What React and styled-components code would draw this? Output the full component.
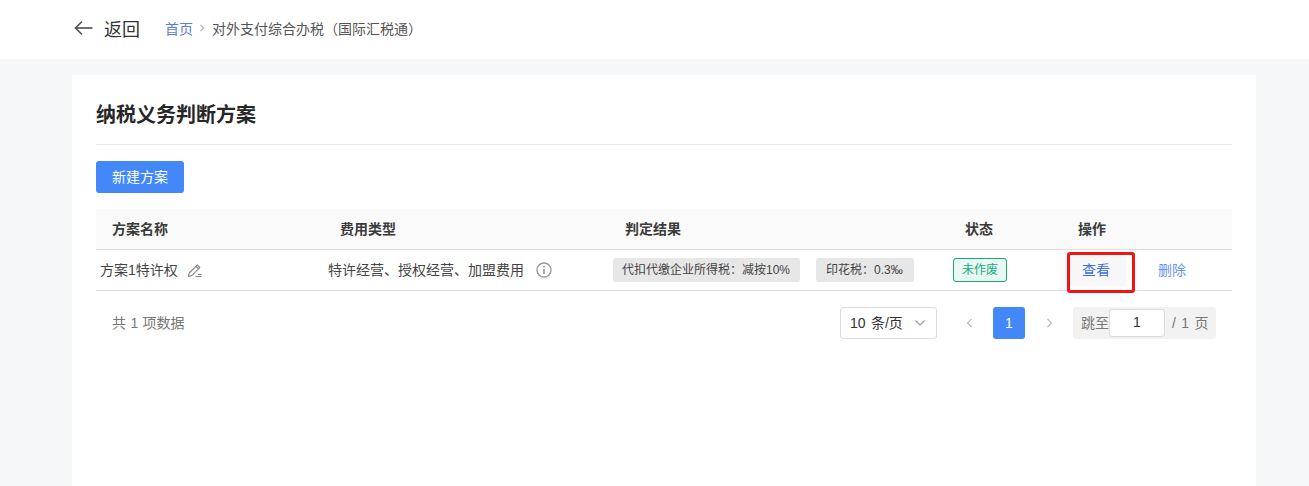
import React from 'react'
import styled, { createGlobalStyle } from 'styled-components'

const columns = '228px 285px 340px 113px 1fr'

const App = () => {
  return (
    <>
      <GlobalStyle />
      <Page>
        <TopBar>
          <BackLink>
            <svg width="19" height="16" viewBox="0 0 19 16" fill="none" stroke="#555" strokeWidth="1.7">
              <path d="M18.5 8H1.5" />
              <path d="M8 1.5 1.5 8 8 14.5" />
            </svg>
            <BackText>返回</BackText>
          </BackLink>
          <Crumbs>
            <CrumbLink>首页</CrumbLink>
            <CrumbSep>
              <svg width="6" height="8" viewBox="0 0 6 8" fill="none" stroke="#b4b4b4" strokeWidth="1.2">
                <path d="m1.5 .8 3 3.2-3 3.2" />
              </svg>
            </CrumbSep>
            <CrumbText>对外支付综合办税（国际汇税通）</CrumbText>
          </Crumbs>
        </TopBar>
        <Card>
          <Title>纳税义务判断方案</Title>
          <PrimaryButton>新建方案</PrimaryButton>
          <HeadRow>
            <HeadCell>方案名称</HeadCell>
            <HeadCell>费用类型</HeadCell>
            <HeadCell>判定结果</HeadCell>
            <HeadCell>状态</HeadCell>
            <HeadCell>操作</HeadCell>
          </HeadRow>
          <BodyRow>
            <BodyCell $text>
              方案1特许权
              <IconSlot $gap={9}>
                <svg width="15" height="15" viewBox="0 0 15 15" fill="none" stroke="#808080" strokeWidth="1.1">
                  <path d="M1.5 13.5 2.2 10 10.2 2l2.6 2.6-8 8z" />
                  <path d="M9 3.3l2.6 2.6" />
                  <path d="M8.5 13.5h6M11 11.5h3.5" />
                </svg>
              </IconSlot>
            </BodyCell>
            <BodyCell $text>
              特许经营、授权经营、加盟费用
              <IconSlot $gap={12}>
                <svg width="16" height="16" viewBox="0 0 16 16" fill="none" stroke="#999" strokeWidth="1.4">
                  <circle cx="8" cy="8" r="7" />
                  <path d="M8 7v5" strokeWidth="1.7" />
                  <path d="M8 3.8v1.7" strokeWidth="1.7" />
                </svg>
              </IconSlot>
            </BodyCell>
            <BodyCell>
              <ResultTag>代扣代缴企业所得税：减按10%</ResultTag>
              <ResultTag $second>印花税：0.3‰</ResultTag>
            </BodyCell>
            <BodyCell>
              <StatusTag>未作废</StatusTag>
            </BodyCell>
            <ActionCell>
              <ViewButton>查看</ViewButton>
              <DeleteLink>删除</DeleteLink>
              <RedMark />
            </ActionCell>
          </BodyRow>
          <PagerRow>
            <Total>共 1 项数据</Total>
            <PageSize>
              <PageSizeText>10 条/页</PageSizeText>
              <svg width="12" height="8" viewBox="0 0 12 8" fill="none" stroke="#999" strokeWidth="1.2">
                <path d="m1.5 1.5 4.5 4.5 4.5-4.5" />
              </svg>
            </PageSize>
            <PageArrow $left={16}>
              <svg width="7" height="10" viewBox="0 0 7 10" fill="none" stroke="#bbb" strokeWidth="1.2">
                <path d="M5.5 1 1.5 5l4 4" />
              </svg>
            </PageArrow>
            <PageNumber>1</PageNumber>
            <PageArrow>
              <svg width="7" height="10" viewBox="0 0 7 10" fill="none" stroke="#bbb" strokeWidth="1.2">
                <path d="m1.5 1 4 4-4 4" />
              </svg>
            </PageArrow>
            <Jumper>
              <JumpLabel>跳至</JumpLabel>
              <JumpInput>1</JumpInput>
              <JumpSuffix>/ 1 页</JumpSuffix>
            </Jumper>
          </PagerRow>
        </Card>
      </Page>
    </>
  )
}

export default App

const GlobalStyle = createGlobalStyle`
  html, body {
    margin: 0;
    padding: 0;
    height: 100%;
    overflow: hidden;
    background: #f6f7f9;
    font-family: "Liberation Sans", "Noto Sans CJK SC", sans-serif;
  }
`

const Page = styled.div`
  height: 486px;
  display: flex;
  flex-direction: column;
  overflow: hidden;
  background: #f6f7f9;
`

const TopBar = styled.div`
  height: 59px;
  box-sizing: border-box;
  flex: none;
  display: flex;
  align-items: center;
  padding: 0 0 3px 74px;
  background: #fff;
`

const BackLink = styled.div`
  display: flex;
  align-items: center;
  gap: 11px;
`

const BackText = styled.span`
  font-size: 18px;
  color: #333;
`

const Crumbs = styled.div`
  display: flex;
  align-items: center;
  margin-left: 25px;
  font-size: 14px;
`

const CrumbLink = styled.span`
  color: #5b7fd6;
`

const CrumbSep = styled.span`
  display: flex;
  margin: 0 7px 0 6px;
`

const CrumbText = styled.span`
  color: #555;
`

const Card = styled.div`
  flex: 1;
  margin: 16px 53px 0 72px;
  padding: 0 24px;
  background: #fff;
`

const Title = styled.h1`
  height: 70px;
  margin: 0 0 16px;
  box-sizing: border-box;
  padding-top: 25px;
  line-height: 30px;
  font-size: 20px;
  font-weight: 700;
  color: #262626;
  border-bottom: 1px solid #ebebeb;
`

const PrimaryButton = styled.button`
  display: block;
  width: 88px;
  height: 32px;
  padding: 0 0 2px;
  border: 0;
  border-radius: 3px;
  background: #4387f8;
  color: #fff;
  font-family: inherit;
  font-size: 14px;
`

const HeadRow = styled.div`
  display: grid;
  grid-template-columns: ${columns};
  height: 41px;
  margin-top: 16px;
  box-sizing: border-box;
  background: #fafafa;
  border-bottom: 1px solid #dcdcdc;
`

const HeadCell = styled.div`
  display: flex;
  align-items: center;
  padding: 0 0 2px 16px;
  font-size: 14px;
  font-weight: 700;
  color: #3a3a3a;
`

const BodyRow = styled.div`
  display: grid;
  grid-template-columns: ${columns};
  height: 41px;
  box-sizing: border-box;
  border-bottom: 1px solid #dcdcdc;
`

const BodyCell = styled.div`
  display: flex;
  align-items: center;
  padding: 0 0 ${(p) => (p.$text ? 2 : 0)}px 4px;
  font-size: 14px;
  color: #444;
  white-space: nowrap;
`

const IconSlot = styled.span`
  display: flex;
  margin: 2px 0 0 ${(p) => p.$gap}px;
`

const ResultTag = styled.span`
  height: 24px;
  line-height: 24px;
  margin-left: ${(p) => (p.$second ? 16 : 0)}px;
  padding: 0 ${(p) => (p.$second ? '11px 0 10px' : '10px 0 9px')};
  border-radius: 3px;
  background: #e7e7e7;
  font-size: 12px;
  color: #444;
`

const StatusTag = styled.span`
  width: 54px;
  height: 24px;
  box-sizing: border-box;
  line-height: 22px;
  text-align: center;
  border: 1px solid #14a97c;
  border-radius: 3px;
  background: #e9f8f2;
  font-size: 12px;
  color: #14a97c;
`

const ActionCell = styled.div`
  position: relative;
  display: flex;
  align-items: center;
  font-size: 14px;
`

const ViewButton = styled.span`
  width: 58px;
  height: 32px;
  margin-left: 6px;
  box-sizing: border-box;
  padding-left: 14px;
  line-height: 32px;
  border-radius: 3px;
  background: #f7f7f7;
  color: #3b6fe0;
`

const DeleteLink = styled.span`
  margin: 0 0 2px 32px;
  color: #6b93f2;
`

const RedMark = styled.div`
  position: absolute;
  left: 5px;
  top: 2px;
  width: 68px;
  height: 41px;
  box-sizing: border-box;
  border: 3px solid #f01414;
  border-radius: 3px;
`

const PagerRow = styled.div`
  display: flex;
  align-items: center;
  height: 32px;
  margin-top: 16px;
  padding: 0 16px;
`

const Total = styled.span`
  margin: 0 auto 2px 0;
  font-size: 14px;
  word-spacing: 0.5px;
  color: #777;
`

const PageSize = styled.div`
  width: 97px;
  height: 32px;
  box-sizing: border-box;
  display: flex;
  align-items: center;
  justify-content: space-between;
  padding: 0 10px 0 9px;
  border: 1px solid #dcdcdc;
  border-radius: 3px;
  font-size: 14px;
  color: #333;
`

const PageSizeText = styled.span`
  margin-bottom: 2px;
  word-spacing: 1.5px;
`

const PageArrow = styled.div`
  width: 32px;
  height: 32px;
  margin-left: ${(p) => p.$left || 0}px;
  display: flex;
  align-items: center;
  justify-content: center;
`

const PageNumber = styled.div`
  width: 32px;
  height: 32px;
  margin: 0 8px;
  line-height: 32px;
  text-align: center;
  border-radius: 3px;
  background: #4387f8;
  color: #fff;
  font-size: 14px;
`

const Jumper = styled.div`
  width: 143px;
  height: 32px;
  box-sizing: border-box;
  margin-left: 8px;
  display: flex;
  align-items: center;
  padding-left: 8px;
  border-radius: 3px;
  background: #f2f2f2;
  font-size: 14px;
  color: #777;
`

const JumpLabel = styled.span`
  margin-bottom: 2px;
`

const JumpInput = styled.div`
  width: 56px;
  height: 28px;
  box-sizing: border-box;
  line-height: 24px;
  text-align: center;
  border: 1px solid #dcdcdc;
  border-radius: 3px;
  background: #fff;
  color: #333;
`

const JumpSuffix = styled.span`
  margin: 0 0 2px 7px;
  word-spacing: 1.5px;
`
